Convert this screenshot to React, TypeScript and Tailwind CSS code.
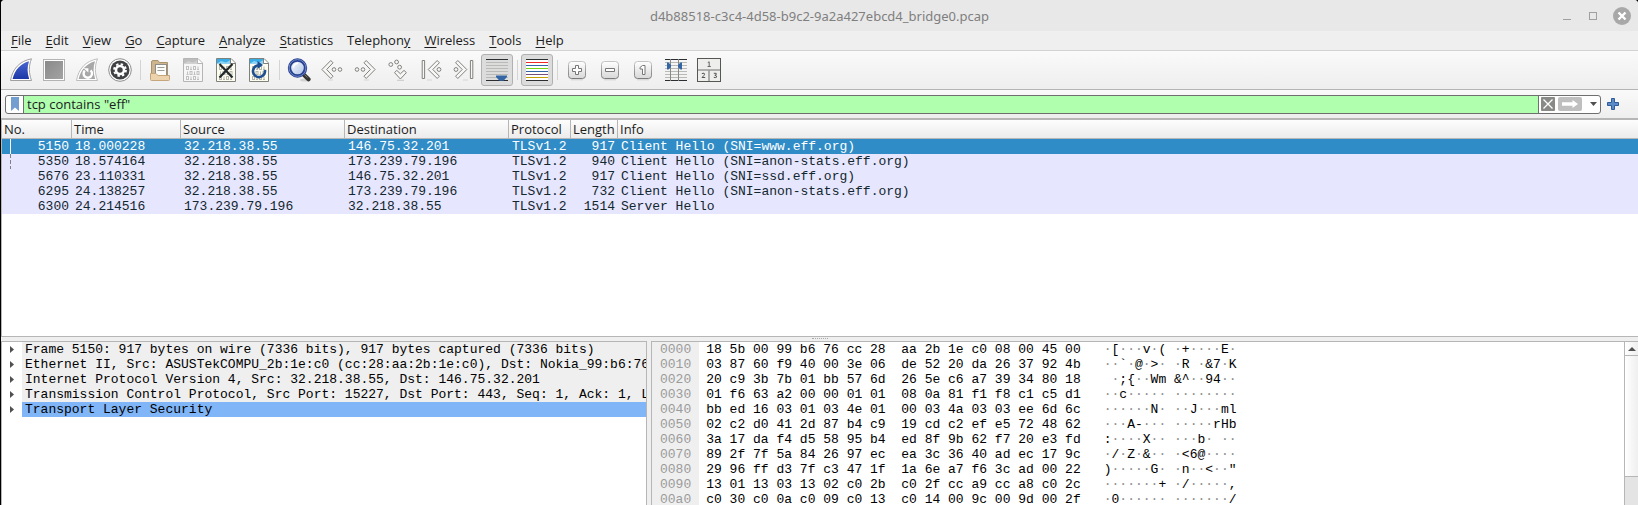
import React, { useState } from "react";

const MENUS: [string, string, string][] = [
  ["", "F", "ile"],
  ["", "E", "dit"],
  ["", "V", "iew"],
  ["", "G", "o"],
  ["", "C", "apture"],
  ["", "A", "nalyze"],
  ["", "S", "tatistics"],
  ["Telephon", "y", ""],
  ["", "W", "ireless"],
  ["", "T", "ools"],
  ["", "H", "elp"],
];

const PACKETS = [
  [5150, "18.000228", "32.218.38.55", "146.75.32.201", "TLSv1.2", 917, "Client Hello (SNI=www.eff.org)"],
  [5350, "18.574164", "32.218.38.55", "173.239.79.196", "TLSv1.2", 940, "Client Hello (SNI=anon-stats.eff.org)"],
  [5676, "23.110331", "32.218.38.55", "146.75.32.201", "TLSv1.2", 917, "Client Hello (SNI=ssd.eff.org)"],
  [6295, "24.138257", "32.218.38.55", "173.239.79.196", "TLSv1.2", 732, "Client Hello (SNI=anon-stats.eff.org)"],
  [6300, "24.214516", "173.239.79.196", "32.218.38.55", "TLSv1.2", 1514, "Server Hello"],
];

const LAYERS = [
  "Frame 5150: 917 bytes on wire (7336 bits), 917 bytes captured (7336 bits)",
  "Ethernet II, Src: ASUSTekCOMPU_2b:1e:c0 (cc:28:aa:2b:1e:c0), Dst: Nokia_99:b6:76",
  "Internet Protocol Version 4, Src: 32.218.38.55, Dst: 146.75.32.201",
  "Transmission Control Protocol, Src Port: 15227, Dst Port: 443, Seq: 1, Ack: 1, L",
  "Transport Layer Security",
];

const HEX = [
  "18 5b 00 99 b6 76 cc 28 aa 2b 1e c0 08 00 45 00",
  "03 87 60 f9 40 00 3e 06 de 52 20 da 26 37 92 4b",
  "20 c9 3b 7b 01 bb 57 6d 26 5e c6 a7 39 34 80 18",
  "01 f6 63 a2 00 00 01 01 08 0a 81 f1 f8 c1 c5 d1",
  "bb ed 16 03 01 03 4e 01 00 03 4a 03 03 ee 6d 6c",
  "02 c2 d0 41 2d 87 b4 c9 19 cd c2 ef e5 72 48 62",
  "3a 17 da f4 d5 58 95 b4 ed 8f 9b 62 f7 20 e3 fd",
  "89 2f 7f 5a 84 26 97 ec ea 3c 36 40 ad ec 17 9c",
  "29 96 ff d3 7f c3 47 1f 1a 6e a7 f6 3c ad 00 22",
  "13 01 13 03 13 02 c0 2b c0 2f cc a9 cc a8 c0 2c",
  "c0 30 c0 0a c0 09 c0 13 c0 14 00 9c 00 9d 00 2f",
];

function Svg({ children }: { children: React.ReactNode }) {
  return (
    <svg width="24" height="24" viewBox="0 0 24 24" fill="none" aria-hidden="true">
      <defs>
        <linearGradient id="fin" x1="0" y1="0" x2="0" y2="1">
          <stop offset="0" stopColor="#4a66cf" />
          <stop offset="1" stopColor="#1c38a8" />
        </linearGradient>
        <linearGradient id="grey" x1="0" y1="0" x2="1" y2="1">
          <stop offset="0" stopColor="#8a8a8a" />
          <stop offset="1" stopColor="#a3a3a3" />
        </linearGradient>
        <linearGradient id="key" x1="0" y1="0" x2="0" y2="1">
          <stop offset="0" stopColor="#ffffff" />
          <stop offset="1" stopColor="#d8d8d8" />
        </linearGradient>
        <linearGradient id="keyEdge" x1="0" y1="0" x2="0" y2="1">
          <stop offset="0" stopColor="#c4c4c4" />
          <stop offset="1" stopColor="#7b7b7b" />
        </linearGradient>
        <linearGradient id="lens" x1="0" y1="0" x2="1" y2="1">
          <stop offset="0" stopColor="#ffffff" />
          <stop offset="1" stopColor="#a9c0e6" />
        </linearGradient>
      </defs>
      {children}
    </svg>
  );
}

function Fin({ grey }: { grey?: boolean }) {
  return (
    <Svg>
      <path d="M1.5 22.5C3.5 11 10.5 3 22.5.8C19.5 8 19.8 15 22.5 22.5Z" fill="#fff" stroke={grey ? "#bdbdbd" : "#a0a0a0"} />
      <path d="M3.6 20.9C6 11.5 11.5 5.5 20 3.2C18 9 18.2 15 20.2 20.9Z" fill={grey ? "#a8a8a8" : "url(#fin)"} />
      {grey && (
        <>
          <path d="M9.8 12.6A4.2 4.2 0 1 0 15.6 12.4" stroke="#fff" strokeWidth="2.4" />
          <path d="M8.6 10.2H13.4V14.6Z" fill="#fff" />
        </>
      )}
    </Svg>
  );
}

function Paper({ grey, children }: { grey?: boolean; children?: React.ReactNode }) {
  const bit = grey ? "#c0c0c0" : "#b4b6ac";
  return (
    <Svg>
      <path d="M2.5.5H17L21.5 5V23.5H2.5Z" fill={grey ? "#f6f6f6" : "#fdfdef"} stroke={grey ? "#b5b5b5" : "#7f817c"} />
      <path d="M3 1H16.5V5.5H3Z" fill={grey ? "#bdbdbd" : "#37aee8"} />
      <path d="M3 5.5L7 3L12 4.5L16.5 2V5.8H3Z" fill={grey ? "#cfcfcf" : "#8fd2f4"} />
      <path d="M16.5 1V5.5H21.2" fill="#fff" stroke={grey ? "#b5b5b5" : "#7f817c"} />
      {[8.5, 13.5, 18.5].map((y, r) => (
        <g key={y} stroke={bit} strokeWidth="1">
          {[6, 9.5, 13, 16.5].map((x, c) =>
            (r + c) % 2 ? (
              <path key={x} d={`M${x + 0.5} ${y}V${y + 3}M${x - 0.5} ${y + 3}H${x + 1.5}`} />
            ) : (
              <rect key={x} x={x - 0.5} y={y} width="2" height="3" />
            )
          )}
        </g>
      ))}
      {children}
    </Svg>
  );
}

const Key = ({ children }: { children: React.ReactNode }) => (
  <Svg>
    <path d="M6 21.8H18" stroke="#cfcfcf" />
    <rect x="3.5" y="3.5" width="17" height="17" rx="3" fill="url(#key)" stroke="url(#keyEdge)" />
    <g fill="#fff" stroke="#777">{children}</g>
  </Svg>
);

const Arrow = ({ flip, bar }: { flip?: boolean; bar?: boolean }) => (
  <Svg>
    <g transform={flip ? "matrix(-1 0 0 1 24 0)" : undefined} fill="#f7f7f5" stroke="#80827d">
      {bar ? (
        <>
          <path d="M3.2 2.5H5.6V20.5H3.2Z" />
          <path d="M18.2 2.5L9.2 11.5L18.2 20.5L20.4 18.2L13.8 11.5L20.4 4.8Z" />
          <circle cx="20" cy="11.5" r="1.9" />
        </>
      ) : (
        <>
          <path d="M10.8 2.5L1.9 11.5L10.8 20.5L13 18.2L6.6 11.5L13 4.8Z" />
          <circle cx="14" cy="11.5" r="1.8" />
          <circle cx="20" cy="11.5" r="1.8" />
        </>
      )}
    </g>
    <path d={flip ? "M11 22H16" : "M8 22H13"} stroke="#d5d5d5" />
  </Svg>
);

const FolderIcon = () => (
  <Svg>
    <path d="M3.5 20V4Q3.5 2.5 5 2.5H10L11.5 4.5H19.5V20Z" fill="#cdb58d" stroke="#ab946b" />
    <rect x="7.5" y="6.5" width="11" height="11" fill="#fcfcfa" stroke="#8e8e8a" />
    <path d="M9.5 9.5H16.5M9.5 12.5H16.5" stroke="#9d9d99" />
    <path d="M2.5 15.5H8L10 17.5H21.5V21.5Q21.5 22.5 20.5 22.5H3.5Q2.5 22.5 2.5 21.5Z" fill="#ecd3ae" stroke="#c4a67a" />
  </Svg>
);

const GearIcon = () => (
  <Svg>
    <circle cx="12" cy="12" r="11.3" fill="#fff" stroke="#8e8e8e" />
    <circle cx="12" cy="12" r="9.5" fill="#3f4142" />
    <circle cx="12" cy="12" r="4" stroke="#fff" strokeWidth="2.6" />
    <circle cx="12" cy="12" r="5.9" stroke="#fff" strokeWidth="2" strokeDasharray="2.4 2.23" />
  </Svg>
);

const FindIcon = () => (
  <Svg>
    <ellipse cx="18" cy="22" rx="5" ry="1.6" fill="#d2d2d2" />
    <path d="M15.8 15.8L21.5 21.3" stroke="#33332f" strokeWidth="4.2" strokeLinecap="round" />
    <path d="M16.4 15.6L20.5 19.6" stroke="#83837a" strokeWidth="1" />
    <circle cx="10.5" cy="10" r="8" fill="url(#lens)" stroke="#27408f" strokeWidth="3.4" />
    <circle cx="10.5" cy="10" r="8.4" stroke="#6f88cc" strokeWidth="1" />
    <path d="M6.5 9.5A4.5 4.5 0 0 1 11 5.5" stroke="#fff" strokeWidth="1.6" />
  </Svg>
);

const GotoIcon = () => (
  <Svg>
    <g fill="#f7f7f5" stroke="#80827d">
      <circle cx="4.8" cy="6.5" r="1.9" />
      <circle cx="10.6" cy="4" r="1.9" />
      <circle cx="13.6" cy="9.2" r="1.9" />
      <path d="M8.5 14.6L10.8 12.4L14.4 15.8L18 12.4L20.4 14.6L14.4 21Z" />
    </g>
    <path d="M11 22.3H18" stroke="#c9c9c9" />
  </Svg>
);

const Lines = ({ colors }: { colors: string[] }) => (
  <>
    <path d="M1 1.5H23M1 22.5H23" stroke="#2b2f31" strokeWidth="1" />
    {colors.map((c, i) => (
      <path key={i} d={`M1 ${4.5 + i * 3}H23`} stroke={c} />
    ))}
  </>
);

const ScrollIcon = () => (
  <Svg>
    <Lines colors={["#b9bab6", "#b9bab6", "#b9bab6", "#b9bab6", "#b9bab6", "#b9bab6"]} />
    <path d="M11 17.5H22V19L18.5 22.8H14.5L11 19Z" fill="#3465a4" />
  </Svg>
);

const ColorIcon = () => (
  <Svg>
    <path d="M1 1H23V23H1Z" fill="#fff" />
    <Lines colors={["#ef2929", "#3465a4", "#73d216", "#3465a4", "#75507b", "#c4a000"]} />
  </Svg>
);

const ColumnsIcon = () => (
  <Svg>
    <Lines colors={["#b9bab6", "#b9bab6", "#b9bab6", "#b9bab6", "#b9bab6", "#b9bab6"]} />
    <path d="M6.5 1V23M14.5 1V23" stroke="#888a85" />
    <path d="M3 4.5H4.5L7 7V9L4.5 11.5H3ZM18 4.5H16.5L14 7V9L16.5 11.5H18Z" fill="#3465a4" />
  </Svg>
);

const LayoutIcon = () => (
  <Svg>
    <rect x=".5" y=".5" width="23" height="23" fill="#eeeeec" stroke="#555753" />
    <path d="M1 12H23M12 12V23" stroke="#9a9c98" strokeWidth="1.6" />
    <path d="M10.8 4.6L12.2 3.8V8.5M10.6 8.5H13.8" stroke="#666" />
    <path d="M4.8 15.6Q7.8 14.4 7.6 16.2Q7.4 17.2 5 19.5H8.2" stroke="#555" />
    <path d="M16.8 15.3H19.2Q20 16.8 17.8 17.3Q20.6 17.8 19.4 19.3Q18.4 20 16.8 19.3" stroke="#555" />
  </Svg>
);

type Tool = { label: string; icon: React.ReactNode; on?: boolean } | null;

const TOOLS: Tool[] = [
  { label: "Start capture", icon: <Fin /> },
  {
    label: "Stop capture",
    icon: (
      <Svg>
        <rect x="1.5" y="1.5" width="21" height="21" fill="#fff" stroke="#b3b3b3" />
        <rect x="3" y="3" width="18" height="18" fill="url(#grey)" />
      </Svg>
    ),
  },
  { label: "Restart capture", icon: <Fin grey /> },
  { label: "Capture options", icon: <GearIcon /> },
  null,
  { label: "Open file", icon: <FolderIcon /> },
  { label: "Save file", icon: <Paper grey /> },
  {
    label: "Close file",
    icon: (
      <Paper>
        <path d="M5.5 6L18.5 19.5M18.5 6L5.5 19.5" stroke="#22282b" strokeWidth="2.2" />
      </Paper>
    ),
  },
  {
    label: "Reload file",
    icon: (
      <Paper>
        <path d="M17.9 12A6 6 0 1 1 11 7.2" stroke="#1d4f91" strokeWidth="2.6" />
        <path d="M10.5 3L16 7L10.5 11Z" fill="#1d4f91" />
      </Paper>
    ),
  },
  null,
  { label: "Find packet", icon: <FindIcon /> },
  { label: "Previous packet", icon: <Arrow /> },
  { label: "Next packet", icon: <Arrow flip /> },
  { label: "Go to packet", icon: <GotoIcon /> },
  { label: "First packet", icon: <Arrow bar /> },
  { label: "Last packet", icon: <Arrow bar flip /> },
  { label: "Auto scroll", icon: <ScrollIcon />, on: true },
  null,
  { label: "Colorize packets", icon: <ColorIcon />, on: true },
  null,
  { label: "Zoom in", icon: <Key><path d="M10.5 7.5H13.5V10.5H16.5V13.5H13.5V16.5H10.5V13.5H7.5V10.5H10.5Z" /></Key> },
  { label: "Zoom out", icon: <Key><path d="M7.5 10.5H16.5V13.5H7.5Z" /></Key> },
  { label: "Normal size", icon: <Key><path d="M9 9.5L11.5 7.5H14V16.5H11.5V11H9Z" /></Key> },
  { label: "Resize columns", icon: <ColumnsIcon /> },
  { label: "Reset layout", icon: <LayoutIcon /> },
];

const COLS: [string, string][] = [
  ["No.", "w-[70px]"],
  ["Time", "w-[109px]"],
  ["Source", "w-[164px]"],
  ["Destination", "w-[164px]"],
  ["Protocol", "w-[62px]"],
  ["Length", "w-[47px]"],
  ["Info", ""],
];

function Ascii({ bytes }: { bytes: string[] }) {
  return (
    <>
      {bytes.map((b, i) => {
        const n = parseInt(b, 16);
        const shown = n >= 32 && n < 127;
        return (
          <React.Fragment key={i}>
            {i === 8 && " "}
            {shown ? String.fromCharCode(n) : <span className="text-[#8c8c8c]">·</span>}
          </React.Fragment>
        );
      })}
    </>
  );
}

export default function App() {
  const [filter, setFilter] = useState('tcp contains "eff"');
  const [selected, setSelected] = useState(0);

  return (
    <div className="h-screen bg-black pl-px font-['Open_Sans',sans-serif] text-[13px] text-[#1c1c1c]">
      <div className="flex h-full flex-col overflow-hidden rounded-t-[4px] bg-[#efefef]">
        <header className="grid h-[31px] shrink-0 grid-cols-[1fr_auto_1fr] items-center bg-[#e8e8e8]">
          <span />
          <h1 className="font-['Noto_Sans',sans-serif] text-[13px] leading-5 text-[#7f7f7f]">
            d4b88518-c3c4-4d58-b9c2-9a2a427ebcd4_bridge0.pcap
          </h1>
          <div className="flex items-center justify-end gap-[14px] pr-[7px]">
            <button aria-label="Minimize" className="flex h-4 w-3 items-end justify-center pb-1">
              <span className="h-px w-2 bg-[#a0a0a0]" />
            </button>
            <button aria-label="Maximize" className="flex h-4 w-3 items-center justify-center">
              <span className="size-2 border border-[#a0a0a0]" />
            </button>
            <button aria-label="Close" className="flex size-[18px] items-center justify-center rounded-full bg-[#a8a8a8]">
              <svg width="10" height="10" viewBox="0 0 10 10" stroke="#fff" strokeWidth="2.4" aria-hidden="true">
                <path d="M1.5 1.5L8.5 8.5M8.5 1.5L1.5 8.5" />
              </svg>
            </button>
          </div>
        </header>

        <nav className="flex h-5 shrink-0 items-start gap-[14px] border-b border-[#d2d2d2] pl-[10px]">
          {MENUS.map(([pre, key, post]) => (
            <button key={pre + key + post} className="leading-[18px]">
              {pre}
              <span className="underline underline-offset-2">{key}</span>
              {post}
            </button>
          ))}
        </nav>

        <div className="flex h-[39px] shrink-0 items-center gap-px border-b border-[#b4b4b4] bg-linear-to-b from-[#fafafa] to-[#eeeeee] pl-1">
          {TOOLS.map((t, i) =>
            t ? (
              <button
                key={t.label}
                aria-label={t.label}
                aria-pressed={t.on}
                className={
                  t.on
                    ? "flex size-8 items-center justify-center rounded-[3px] border border-[#b0b0b0] bg-[#dcdcdc]"
                    : "flex size-8 items-center justify-center"
                }
              >
                {t.icon}
              </button>
            ) : (
              <span key={i} className="flex h-5 w-1.5 justify-center">
                <span className="w-px bg-[#d4d4d4]" />
              </span>
            )
          )}
        </div>

        <div className="flex h-[28px] shrink-0 items-center bg-linear-to-b from-[#fafafa] to-[#eeeeee] pl-1">
          <div className="flex h-[19px] flex-1 overflow-hidden rounded-[3px] border border-[#6f6f6f] bg-white">
            <button aria-label="Bookmarks" className="flex w-[18px] items-center justify-center border-r border-[#6f6f6f]">
              <svg width="8" height="14" viewBox="0 0 8 14" aria-hidden="true">
                <path d="M0 0H8V14L4 10.5L0 14Z" fill="#729fcf" />
              </svg>
            </button>
            <input
              aria-label="Display filter"
              value={filter}
              onChange={(e) => setFilter(e.target.value)}
              className="min-w-0 flex-1 bg-[#afffaf] pl-[3px] leading-4 outline-none"
            />
            <div className="flex items-center gap-[3px] border-l border-[#6f6f6f] pr-[3px] pl-0.5">
              <button aria-label="Clear filter" className="flex size-[14px] items-center justify-center rounded-[1px] bg-[#888a85]">
                <svg width="12" height="12" viewBox="0 0 12 12" stroke="#fff" strokeWidth="1.3" aria-hidden="true">
                  <path d="M1.5 1.5L10.5 10.5M10.5 1.5L1.5 10.5" />
                </svg>
              </button>
              <button aria-label="Apply filter" className="flex h-[14px] w-6 items-center justify-center rounded-[2px] bg-[#bfbfbf]">
                <svg width="16" height="8" viewBox="0 0 16 8" aria-hidden="true">
                  <path d="M0 2.2H10.5V0L16 4L10.5 8V5.8H0Z" fill="#fff" />
                </svg>
              </button>
              <button aria-label="Recent filters" className="flex h-4 w-3 items-center justify-end">
                <svg width="7" height="4" viewBox="0 0 7 4" aria-hidden="true">
                  <path d="M0 0H7L3.5 4Z" fill="#505050" />
                </svg>
              </button>
            </div>
          </div>
          <button aria-label="Add filter button" className="flex w-[37px] items-center pl-[6px]">
            <svg width="12" height="12" viewBox="0 0 12 12" aria-hidden="true">
              <path d="M4.5.5H7.5V4.5H11.5V7.5H7.5V11.5H4.5V7.5H.5V4.5H4.5Z" fill="#5b8ac9" stroke="#2d5c9c" />
            </svg>
          </button>
        </div>

        <section className="min-h-0 flex-[216] overflow-hidden border-t-2 border-b border-l border-[#b6b6b6] bg-white">
          <table className="w-full table-fixed border-separate border-spacing-0">
            <thead>
              <tr className="h-[19px] bg-linear-to-b from-[#fdfdfd] to-[#ebebeb] text-left">
                {COLS.map(([name, w], i) => (
                  <th
                    key={name}
                    className={`${w} border-b border-[#b6b6b6] py-0 pr-0 pl-0.5 font-normal leading-[18px] ${i < 6 ? "border-r" : ""}`}
                  >
                    {name}
                  </th>
                ))}
              </tr>
            </thead>
            <tbody className="font-['Liberation_Mono',monospace]">
              {PACKETS.map((row, r) => (
                <tr
                  key={r}
                  onClick={() => setSelected(r)}
                  className={r === selected ? "bg-[#308cc6] text-white" : "bg-[#e7e6ff] text-[#12272e]"}
                >
                  {row.map((cell, c) => (
                    <td
                      key={c}
                      className={
                        c === 0 || c === 5
                          ? "h-[15px] py-0 pr-[3px] pl-0 text-right leading-[15px]"
                          : "h-[15px] truncate py-0 pr-0 pl-[3px] leading-[15px]"
                      }
                    >
                      {c === 0 && r < 2 ? (
                        <span className="flex h-[15px] justify-between pl-2">
                          <span
                            className={
                              r === 0
                                ? "w-px bg-white"
                                : "w-px bg-[repeating-linear-gradient(to_bottom,#808080_0_4px,transparent_4px_6px)]"
                            }
                          />
                          {cell}
                        </span>
                      ) : (
                        cell
                      )}
                    </td>
                  ))}
                </tr>
              ))}
            </tbody>
          </table>
        </section>

        <div className="flex h-1 shrink-0 items-start justify-center pt-px">
          <span className="w-4 border-t border-dotted border-[#aaaaaa]" />
        </div>

        <div className="grid min-h-0 flex-[164] grid-cols-[minmax(0,646fr)_minmax(0,987fr)] gap-1 font-['Liberation_Mono',monospace] text-black">
          <section className="overflow-hidden border border-b-0 border-[#b6b6b6] bg-white">
            <ul>
              {LAYERS.map((text, i) => (
                <li key={text} className="flex h-[15px]">
                  <button aria-label="Expand" className="flex w-5 shrink-0 items-center justify-center">
                    <svg width="4" height="7" viewBox="0 0 4 7" aria-hidden="true">
                      <path d="M0 0L4 3.5L0 7Z" fill="#505050" />
                    </svg>
                  </button>
                  <span
                    className={`min-w-0 flex-1 overflow-hidden pl-[3px] leading-[15px] whitespace-pre ${i === 4 ? "bg-[#80b5f7]" : "bg-[#efefef]"}`}
                  >
                    {text}
                  </span>
                </li>
              ))}
            </ul>
          </section>

          <section className="flex overflow-hidden border-t border-l border-[#b6b6b6] bg-white">
            <div className="min-w-0 flex-1">
              <table className="border-separate border-spacing-0">
                <tbody>
                  {HEX.map((line, i) => {
                    const bytes = line.split(" ");
                    return (
                      <tr key={i} className="leading-[15px] whitespace-pre">
                        <th className="h-[15px] bg-[#efefef] px-2 py-0 font-normal text-[#9b9b9b]">
                          {(i * 16).toString(16).padStart(4, "0")}
                        </th>
                        <td className="h-[15px] py-0 pr-0 pl-[7px]">
                          {bytes.slice(0, 8).join(" ") + "  " + bytes.slice(8).join(" ")}
                        </td>
                        <td className="h-[15px] py-0 pr-0 pl-[23px]">
                          <Ascii bytes={bytes} />
                        </td>
                      </tr>
                    );
                  })}
                </tbody>
              </table>
            </div>
            <div className="flex w-[14px] flex-col border-l border-[#b6b6b6] bg-linear-to-r from-white to-[#efefef]">
              <button aria-label="Scroll up" className="flex h-[14px] items-center justify-center border-b border-[#b6b6b6]">
                <svg width="8" height="4" viewBox="0 0 8 4" aria-hidden="true">
                  <path d="M0 4L4 0L8 4Z" fill="#505050" />
                </svg>
              </button>
              <div className="flex-[121]" />
              <div className="flex-[28] border-t border-[#b6b6b6] bg-[#e4e4e4]" />
            </div>
          </section>
        </div>
      </div>
    </div>
  );
}
